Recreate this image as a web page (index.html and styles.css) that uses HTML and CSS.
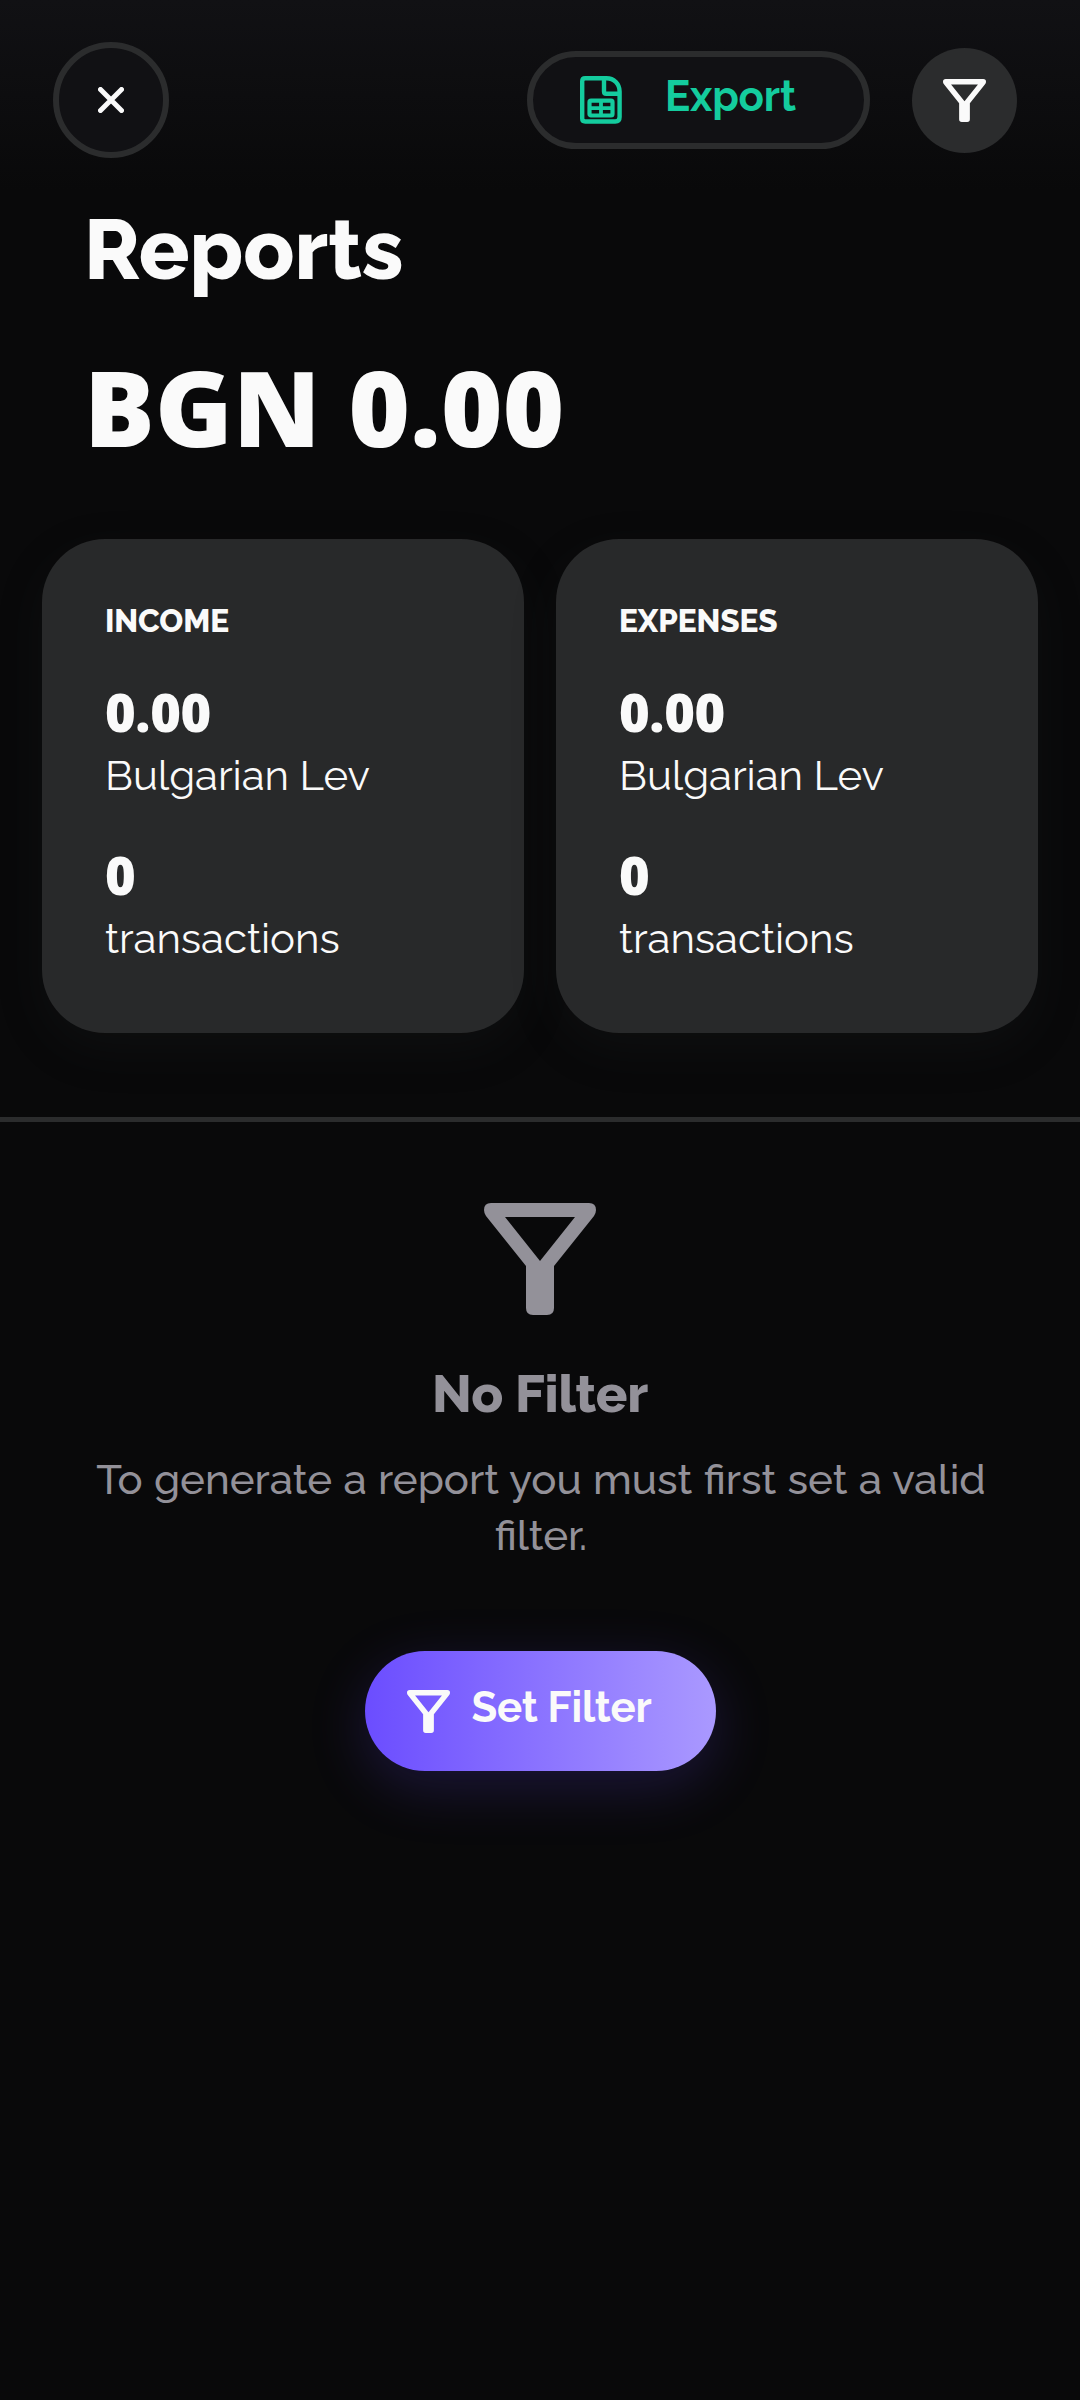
FILE: index.html
```html
<!DOCTYPE html>
<html lang="en">
<head>
<meta charset="utf-8">
<title>Reports</title>
<link rel="stylesheet" href="styles.css">
</head>
<body>
<svg class="defs" aria-hidden="true">
  <symbol id="funnel" viewBox="0 0 112 112">
    <path fill-rule="evenodd" fill="currentColor" d="M7 0H105Q112 0 112 7Q112 10 110 13L70 63V105Q70 112 63 112H49Q42 112 42 105V63L2 13Q0 10 0 7Q0 0 7 0ZM21 14L56 58L91 14Z"/>
  </symbol>
</svg>
<main class="screen">
  <header class="toolbar">
    <button class="close" aria-label="Close">
      <svg width="26" height="26" viewBox="0 0 26 26"><path d="M2.5 2.5L23.5 23.5M23.5 2.5L2.5 23.5" stroke="currentColor" stroke-width="5" stroke-linecap="round"/></svg>
    </button>
    <button class="export">
      <svg width="42" height="48" viewBox="0 0 42 48" fill="none" stroke="currentColor" stroke-width="4.4" stroke-linejoin="round">
        <path d="M5.2 2.2H26.5C34 2.2 39.6 8 39.6 15.500V41Q39.600 45.500 35.300 45.500H5.200Q2.200 45.500 2.200 42.500V5.200Q2.200 2.200 5.200 2.200Z"/>
        <path d="M24 2.500V15.500Q24 17.800 26.300 17.800H39.500"/>
        <rect x="9.500" y="24.700" width="23" height="14.800" rx="1.500" stroke-width="4.200"/>
        <path d="M21 25V39.500M9.500 32.100H32.500" stroke-width="3.800"/>
      </svg>
      <span class="export-label">Export</span>
    </button>
    <button class="filter" aria-label="Filter"><svg width="43" height="43"><use href="#funnel"/></svg></button>
  </header>
  <h1 class="title">Reports</h1>
  <p class="balance">BGN 0.00</p>
  <section class="cards">
    <article class="card">
      <h2 class="card-title">INCOME</h2>
      <p class="value">0.00</p>
      <p class="caption">Bulgarian Lev</p>
      <p class="value count">0</p>
      <p class="caption">transactions</p>
    </article>
    <article class="card">
      <h2 class="card-title">EXPENSES</h2>
      <p class="value">0.00</p>
      <p class="caption">Bulgarian Lev</p>
      <p class="value count">0</p>
      <p class="caption">transactions</p>
    </article>
  </section>
  <section class="empty">
    <svg class="empty-icon" width="112" height="112"><use href="#funnel"/></svg>
    <h2 class="empty-title">No Filter</h2>
    <p class="empty-text">To generate a report you must first set a valid filter.</p>
    <button class="set-filter">
      <svg width="43" height="43"><use href="#funnel"/></svg>
      <span class="set-label">Set Filter</span>
    </button>
  </section>
</main>
</body>
</html>
```
FILE: styles.css
```css
* { box-sizing: border-box; margin: 0; padding: 0; }
body {
  width: 1080px;
  min-height: 2400px;
  background: #09090a;
  color: #fafafa;
  font-family: "Raleway", "Lato", sans-serif;
}
button { border: 0; background: none; color: inherit; font: inherit; }
svg { display: block; flex: none; }
.defs { display: none; }
.screen {
  height: 2400px;
  display: flex;
  flex-direction: column;
  background: linear-gradient(#111114 0, #09090a 190px);
}
.toolbar {
  height: 200px;
  padding: 42px 63px 0 53px;
  display: flex;
  align-items: flex-start;
}
.close {
  width: 116px;
  height: 116px;
  border: 6px solid #2b2c2d;
  border-radius: 50%;
  background: #111114;
  display: grid;
  place-items: center;
}
.export {
  width: 343px;
  height: 98px;
  margin: 9px 42px 0 auto;
  padding-left: 47px;
  border: 6px solid #2b2c2d;
  border-radius: 49px;
  background: #111114;
  color: #14cc9e;
  display: flex;
  align-items: center;
  gap: 43px;
}
.export-label, .set-label {
  font-size: 42px;
  line-height: 56px;
  font-weight: 700;
  letter-spacing: -0.2px;
  white-space: nowrap;
  padding-bottom: 6px;
}
.filter {
  width: 105px;
  height: 105px;
  margin-top: 6px;
  border-radius: 50%;
  background: #2b2c2d;
  display: grid;
  place-items: center;
}
.title {
  padding-left: 84px;
  font-size: 84px;
  line-height: 100px;
  font-weight: 800;
}
.balance {
  margin-top: 37px;
  padding-left: 84px;
  font: 800 105px/140px "Open Sans", sans-serif;
  letter-spacing: 0.3px;
}
.cards {
  margin-top: 62px;
  padding: 0 42px;
  display: grid;
  grid-template-columns: 1fr 1fr;
  gap: 32px;
}
.card {
  height: 494px;
  padding: 62px 63px 0;
  border-radius: 63px;
  background: #28292a;
  box-shadow: 0 16px 48px rgba(43, 44, 45, .15);
}
.card-title {
  font-size: 31.5px;
  line-height: 40px;
  font-weight: 800;
  letter-spacing: -0.12px;
}
.value {
  margin-top: 41px;
  font: 800 52.5px/60px "Open Sans", sans-serif;
  letter-spacing: -0.4px;
}
.count { margin-top: 41px; }
.caption {
  margin-top: 6px;
  font-size: 42px;
  line-height: 56px;
  font-weight: 400;
  letter-spacing: -0.06px;
}
.empty {
  margin-top: 84px;
  padding: 81px 84px 0;
  flex: 1;
  border-top: 5px solid #2b2c2d;
  display: flex;
  flex-direction: column;
  align-items: center;
  color: #939199;
}
.empty-title {
  margin-top: 49px;
  font-size: 52.5px;
  line-height: 60px;
  font-weight: 800;
  letter-spacing: -0.25px;
}
.empty-text {
  margin-top: 28px;
  padding-left: 2px;
  font-size: 42px;
  line-height: 56px;
  font-weight: 500;
  word-spacing: 0.7px;
  text-align: center;
}
.set-filter {
  width: 351px;
  height: 120px;
  margin-top: 87px;
  padding-left: 42px;
  border-radius: 60px;
  background: linear-gradient(90deg, #6b4dff, #aa99ff);
  box-shadow: 0 16px 60px rgba(107, 77, 255, .2);
  color: #fafafa;
  display: flex;
  align-items: center;
  gap: 22px;
}
```
